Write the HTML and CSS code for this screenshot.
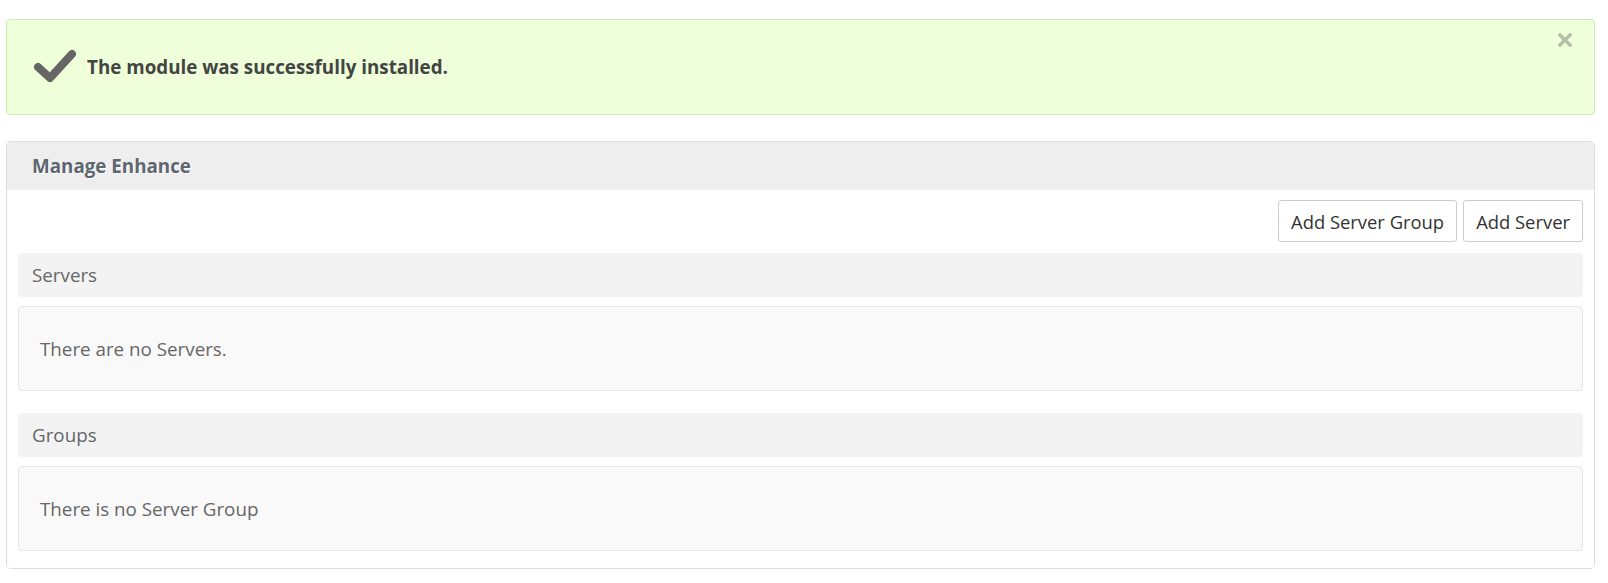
FILE: index.html
```html
<!DOCTYPE html>
<html>
<head>
<meta charset="utf-8">
<link rel="stylesheet" href="styles.css">
</head>
<body>
<div class="page">
  <div class="alert">
    <svg class="alert-icon" width="44" height="34" viewBox="0 0 44 34">
      <path d="M5 18 L17 29 L39 5" fill="none" stroke="#666" stroke-width="8" stroke-linecap="round" stroke-linejoin="round"/>
    </svg>
    <span class="alert-text">The module was successfully installed.</span>
    <svg class="alert-close" width="14" height="14" viewBox="0 0 14 14">
      <path d="M2 2 L12 12 M12 2 L2 12" stroke="currentColor" stroke-width="3.4" stroke-linecap="square"/>
    </svg>
  </div>

  <div class="panel">
    <div class="panel-heading">Manage Enhance</div>
    <div class="panel-body">
      <div class="toolbar">
        <button class="btn">Add Server Group</button>
        <button class="btn">Add Server</button>
      </div>
      <div class="section-head">Servers</div>
      <div class="well">There are no Servers.</div>
      <div class="section-head">Groups</div>
      <div class="well">There is no Server Group</div>
    </div>
  </div>
</div>
</body>
</html>
```
FILE: styles.css
```css
* { box-sizing: border-box; }
html, body { margin: 0; padding: 0; background: #fff; }
body { font-family: "Open Sans", "Noto Sans", sans-serif; color: #555; }
.page { padding: 19px 13px 0 6px; }

.alert {
  position: relative;
  display: flex;
  align-items: center;
  height: 96px;
  background: #eeffd9;
  border: 1px solid #c9eeb4;
  border-radius: 4px;
  padding: 0 0 0 26px;
}
.alert-icon { flex: none; margin-right: 10px; margin-top: -2px; }
.alert-text { font-weight: 700; font-size: 18.8px; color: #444; }
.alert-close {
  position: absolute;
  right: 22px;
  top: 13px;
  color: #b3c0a6;
}

.panel {
  margin-top: 26px;
  border: 1px solid #dedede;
  border-radius: 5px;
  overflow: hidden;
}
.panel-heading {
  height: 48px;
  background: #eeeeee;
  display: flex;
  align-items: center;
  padding-left: 25px;
  font-size: 18.8px;
  font-weight: 700;
  color: #5e6670;
  text-shadow: 1px 1px 0 #fff;
}
.panel-body { padding: 10px 11px 17px 11px; background: #fff; }

.toolbar { display: flex; justify-content: flex-end; gap: 6px; margin-bottom: 11px; }
.btn {
  height: 42px;
  padding: 0 12px;
  background: #fff;
  border: 1px solid #cccccc;
  border-radius: 3px;
  font-family: "Open Sans", "Noto Sans", sans-serif;
  font-size: 18.4px;
  color: #333;
}

.section-head {
  height: 44px;
  background: #f3f3f3;
  border-radius: 4px;
  display: flex;
  align-items: center;
  padding-left: 14px;
  font-size: 18.8px;
  color: #666;
  margin-bottom: 9px;
}
.well {
  height: 85px;
  background: #f9f9f9;
  border: 1px solid #e6e6e6;
  border-radius: 4px;
  display: flex;
  align-items: center;
  padding-left: 21px;
  font-size: 18.8px;
  color: #666;
  margin-bottom: 22px;
}
.well:last-child { margin-bottom: 0; }
```
